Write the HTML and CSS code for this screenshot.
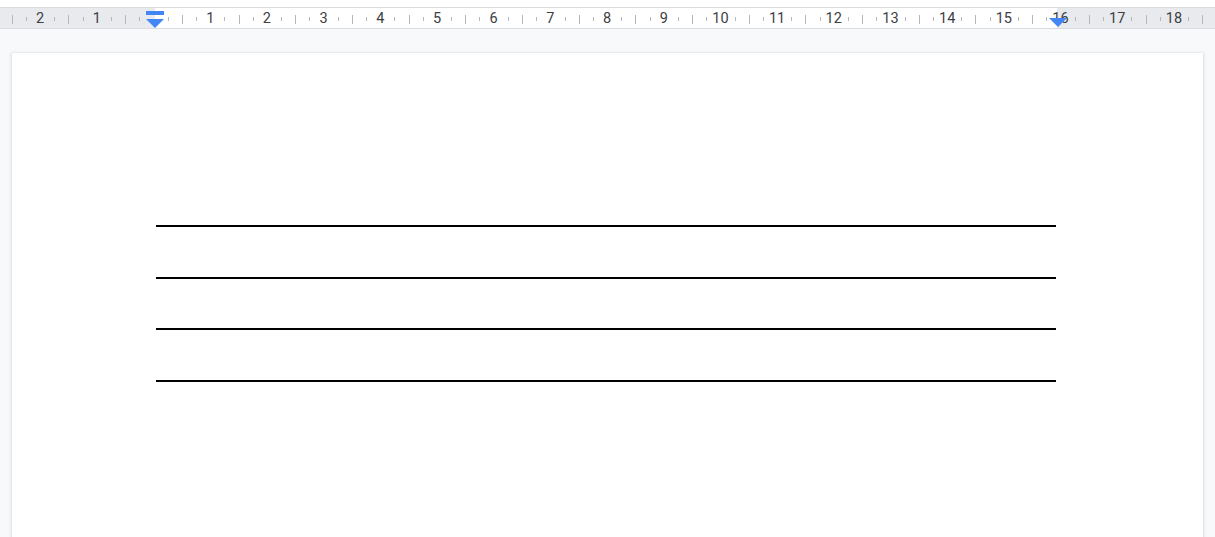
FILE: index.html
```html
<!DOCTYPE html>
<html lang="en">
<head>
<meta charset="utf-8">
<title>Document</title>
<link rel="stylesheet" href="styles.css">
</head>
<body>
<div class="top-strip"></div>
<div class="ruler">
  <div class="ruler-track">
    <div class="cm"><span class="tick long"></span><span class="tick short q1"></span><span class="num">2</span><span class="tick short q3"></span></div>
    <div class="cm"><span class="tick long"></span><span class="tick short q1"></span><span class="num">1</span><span class="tick short q3"></span></div>
    <div class="cm"><span class="tick long"></span><span class="tick short q1"></span><span class="num"></span><span class="tick short q3"></span></div>
    <div class="cm"><span class="tick long"></span><span class="tick short q1"></span><span class="num">1</span><span class="tick short q3"></span></div>
    <div class="cm"><span class="tick long"></span><span class="tick short q1"></span><span class="num">2</span><span class="tick short q3"></span></div>
    <div class="cm"><span class="tick long"></span><span class="tick short q1"></span><span class="num">3</span><span class="tick short q3"></span></div>
    <div class="cm"><span class="tick long"></span><span class="tick short q1"></span><span class="num">4</span><span class="tick short q3"></span></div>
    <div class="cm"><span class="tick long"></span><span class="tick short q1"></span><span class="num">5</span><span class="tick short q3"></span></div>
    <div class="cm"><span class="tick long"></span><span class="tick short q1"></span><span class="num">6</span><span class="tick short q3"></span></div>
    <div class="cm"><span class="tick long"></span><span class="tick short q1"></span><span class="num">7</span><span class="tick short q3"></span></div>
    <div class="cm"><span class="tick long"></span><span class="tick short q1"></span><span class="num">8</span><span class="tick short q3"></span></div>
    <div class="cm"><span class="tick long"></span><span class="tick short q1"></span><span class="num">9</span><span class="tick short q3"></span></div>
    <div class="cm"><span class="tick long"></span><span class="tick short q1"></span><span class="num">10</span><span class="tick short q3"></span></div>
    <div class="cm"><span class="tick long"></span><span class="tick short q1"></span><span class="num">11</span><span class="tick short q3"></span></div>
    <div class="cm"><span class="tick long"></span><span class="tick short q1"></span><span class="num">12</span><span class="tick short q3"></span></div>
    <div class="cm"><span class="tick long"></span><span class="tick short q1"></span><span class="num">13</span><span class="tick short q3"></span></div>
    <div class="cm"><span class="tick long"></span><span class="tick short q1"></span><span class="num">14</span><span class="tick short q3"></span></div>
    <div class="cm"><span class="tick long"></span><span class="tick short q1"></span><span class="num">15</span><span class="tick short q3"></span></div>
    <div class="cm"><span class="tick long"></span><span class="tick short q1"></span><span class="num">16</span><span class="tick short q3"></span></div>
    <div class="cm"><span class="tick long"></span><span class="tick short q1"></span><span class="num">17</span><span class="tick short q3"></span></div>
    <div class="cm"><span class="tick long"></span><span class="tick short q1"></span><span class="num">18</span><span class="tick short q3"></span></div>
    <div class="cm"><span class="tick long"></span><span class="tick short q1"></span><span class="num"></span><span class="tick short q3"></span></div>
  </div>
  <div class="marker marker-left">
    <span class="marker-bar"></span>
    <svg class="marker-tri" width="18" height="9" viewBox="0 0 18 9"><path d="M0 0H18L9 9Z" fill="#4285f4"/></svg>
  </div>
  <div class="marker marker-right">
    <svg class="marker-tri" width="18" height="9" viewBox="0 0 18 9"><path d="M0 0H18L9 9Z" fill="#4285f4"/></svg>
  </div>
</div>
<main class="canvas">
  <section class="page">
    <div class="rules">
      <div class="rule"></div>
      <div class="rule"></div>
      <div class="rule"></div>
      <div class="rule"></div>
    </div>
  </section>
</main>
</body>
</html>
```
FILE: styles.css
```css
html, body {
  margin: 0;
  padding: 0;
}
body {
  background: #f8f9fa;
  font-family: Roboto, "Liberation Sans", Arial, sans-serif;
  width: 1215px;
  height: 537px;
  overflow: hidden;
}
.top-strip {
  height: 7px;
  background: #ffffff;
}
.ruler {
  position: relative;
  height: 20px;
  border-top: 1px solid #dadce0;
  border-bottom: 1px solid #dadce0;
  background: linear-gradient(to right, #e8eaed 0, #e8eaed 155px, #ffffff 155px, #ffffff 1057px, #e8eaed 1057px);
  overflow: hidden;
}
.ruler-track {
  display: flex;
  height: 100%;
  padding-left: 11.8px;
}
.cm {
  flex: 0 0 56.69px;
  display: grid;
  grid-template-columns: repeat(4, 14.1725px);
  grid-template-rows: 20px;
  align-items: center;
}
.tick {
  grid-row: 1;
  width: 1px;
  background: #b4b7bb;
  justify-self: start;
}
.tick.long {
  grid-column: 1;
  height: 9px;
  margin-top: 2px;
}
.tick.short {
  height: 4px;
  margin-top: 2px;
}
.tick.q1 { grid-column: 2; }
.tick.q3 { grid-column: 4; }
.num {
  grid-row: 1;
  grid-column: 2 / 4;
  justify-self: center;
  font-size: 14.5px;
  line-height: 20px;
  color: #3c4043;
  margin-top: 1px;
}
.marker {
  position: absolute;
  display: flex;
  flex-direction: column;
  align-items: center;
}
.marker-left {
  left: 146px;
  top: 3px;
  gap: 4px;
}
.marker-bar {
  display: block;
  width: 18px;
  height: 4px;
  background: #4285f4;
}
.marker-tri {
  display: block;
}
.marker-right {
  left: 1049px;
  top: 10px;
}
.canvas {
  padding: 24px 12px 0 12px;
}
.page {
  width: 1191px;
  height: 484px;
  background: #ffffff;
  box-shadow: 0 1px 3px 1px rgba(60, 64, 67, 0.12), 0 0 1px rgba(60, 64, 67, 0.2);
  padding: 172px 0 0 144px;
  box-sizing: border-box;
}
.rules {
  display: flex;
  flex-direction: column;
  gap: 49.667px;
  width: 900px;
}
.rule {
  height: 2px;
  background: #000000;
}
```
